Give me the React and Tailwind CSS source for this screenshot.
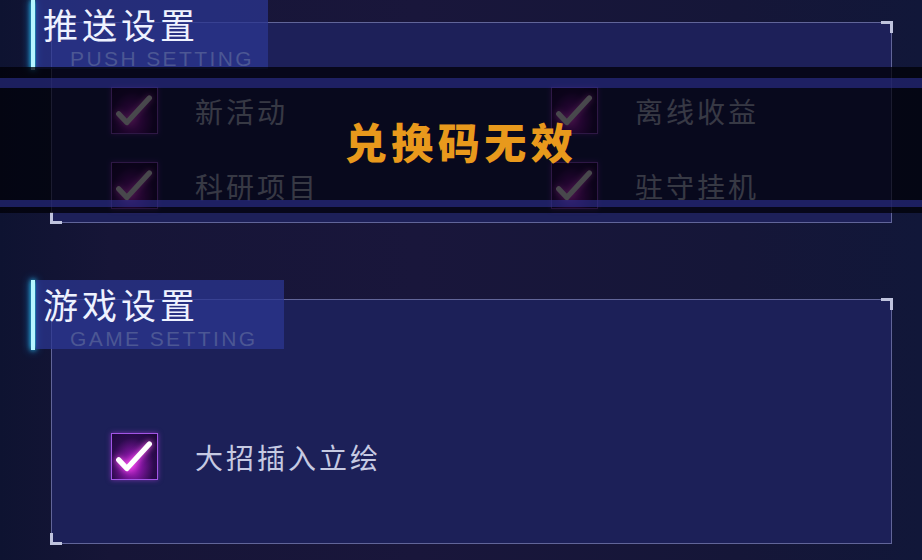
import React from "react";

function Check() {
  return (
    <div className="relative w-[47px] h-[47px] shrink-0 border-[1.5px] border-[#a255e6] bg-[radial-gradient(ellipse_at_45%_70%,#d22ad8_0%,#7a1499_28%,#2c0b4e_62%,#1a0835_100%)] shadow-[0_0_5px_rgba(190,60,230,0.55)]">
      <svg viewBox="0 0 47 47" className="w-full h-full drop-shadow-[0_0_3px_#ff5cf2]">
        <path d="M7 27 L15.5 36 L39 10.5" stroke="#ffffff" strokeWidth="5.5" fill="none" strokeLinecap="round" strokeLinejoin="round" />
      </svg>
    </div>
  );
}

function Item({ label }) {
  return (
    <div className="flex items-center">
      <Check />
      <span className="ml-[37px] text-[28px] leading-none tracking-[3px] text-[#c6cae2]">{label}</span>
    </div>
  );
}

function Corners() {
  return (
    <>
      <div className="absolute -top-[2px] -right-[2px] w-[12px] h-[12px] border-t-[3px] border-r-[3px] border-[#bfc3dd]" />
      <div className="absolute -bottom-[2px] -left-[2px] w-[12px] h-[12px] border-b-[3px] border-l-[3px] border-[#bfc3dd]" />
    </>
  );
}

function Title({ cn, en, boxClass }) {
  return (
    <div className="absolute top-0 left-[31px] flex">
      <div className="w-[4px] h-[70px] bg-[#b6f6ff] shadow-[0_0_5px_#32d9ff,0_0_10px_#1a9cff]" />
      <div className={`ml-[1px] h-[69px] bg-[#2b3590]/75 flex flex-col ${boxClass}`}>
        <div className="mt-[3px] ml-[7px] text-[35px] leading-[42px] tracking-[4px] text-[#eef2ff]">{cn}</div>
        <div className="mt-[3px] ml-[34px] text-[21px] leading-[22px] tracking-[2.4px] font-normal text-[#4c5794] font-['Liberation_Sans',sans-serif]">{en}</div>
      </div>
    </div>
  );
}

export default function App() {
  return (
    <div className="relative w-[922px] h-[560px] overflow-hidden font-['Noto_Sans_CJK_SC','Noto_Sans',sans-serif] bg-[linear-gradient(90deg,#0e1331_0%,#161537_12%,#19163b_45%,#151638_80%,#111739_100%)]">
      {/* section 1 */}
      <div className="relative pt-[22px]">
        <div className="relative ml-[51px] w-[841px] h-[201px] border border-[#8f94c4]/60 bg-[#1d2059]">
          <Corners />
          <div className="pt-[64px] pl-[59px] grid grid-cols-[440px_1fr] gap-y-[28px]">
            <Item label="新活动" />
            <Item label="离线收益" />
            <Item label="科研项目" />
            <Item label="驻守挂机" />
          </div>
        </div>
        <Title cn="推送设置" en="PUSH SETTING" boxClass="w-[232px]" />
      </div>

      {/* section 2 */}
      <div className="relative mt-[57px] pt-[19px]">
        <div className="relative ml-[51px] w-[841px] h-[245px] border border-[#8f94c4]/60 bg-[#1c2058]">
          <Corners />
          <div className="pt-[133px] pl-[59px]">
            <Item label="大招插入立绘" />
          </div>
        </div>
        <Title cn="游戏设置" en="GAME SETTING" boxClass="w-[248px]" />
      </div>

      {/* toast overlay */}
      <div className="absolute top-[67px] left-0 w-full h-[146px] flex flex-col bg-[rgba(2,2,8,0.6)]">
        <div className="h-[11px] bg-[rgba(0,0,6,0.4)]" />
        <div className="h-[10px] bg-[rgba(37,40,122,0.72)]" />
        <div className="flex-1 flex items-center justify-center bg-[rgba(0,0,6,0.3)]">
          <span className="-mt-[6px] text-[42px] leading-none font-black tracking-[4.5px] text-[#e8991c]">兑换码无效</span>
        </div>
        <div className="h-[7px] bg-[rgba(37,40,122,0.72)]" />
        <div className="h-[6px] bg-[rgba(0,0,6,0.4)]" />
      </div>
    </div>
  );
}
